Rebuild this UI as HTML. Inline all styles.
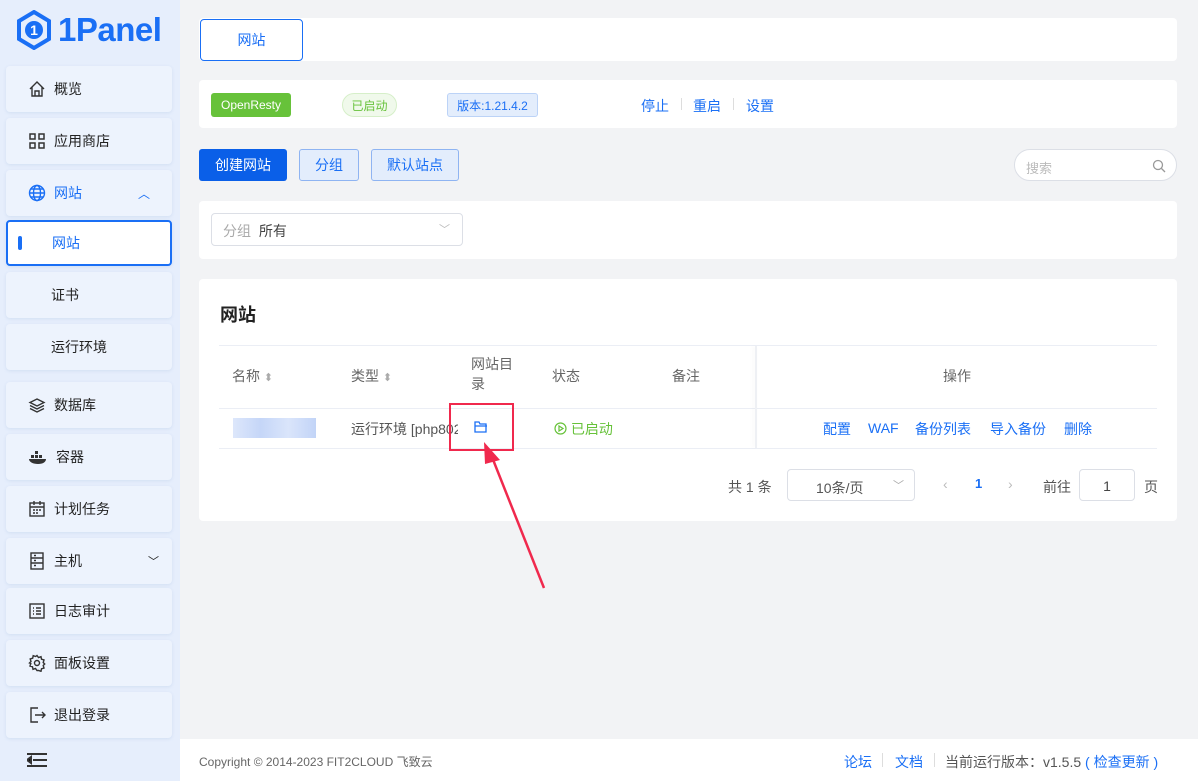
<!DOCTYPE html><html><head><meta charset="utf-8"><style>
*{box-sizing:border-box;margin:0;padding:0}
body{width:1198px;height:781px;overflow:hidden;background:#f2f3f5;font-family:"Liberation Sans","Noto Sans CJK SC",sans-serif;font-size:14px;color:#333;position:relative}
.sb{position:absolute;left:0;top:0;width:180px;height:781px;background:#e6eefc}
.logo{position:absolute;left:16px;top:10px;display:flex;align-items:center}
.logo b{font-size:33px;color:#1a6ff5;font-weight:900;margin-left:6px;letter-spacing:-0.5px}
.it{position:absolute;left:6px;width:166px;height:46px;background:#edf3fd;border-radius:4px;display:flex;align-items:center;padding-left:22px;font-size:14px;color:#222;box-shadow:0 1px 3px rgba(180,200,230,.4)}
.it svg{margin-right:8px}
.it.sub{padding-left:45px}
.it.sel{background:#fff;border:2px solid #1a6ff5;color:#1a6ff5;padding-left:10px}
.card{position:absolute;background:#fff;border-radius:4px}
.a{position:absolute}
.btn{position:absolute;height:32px;border-radius:3px;display:flex;align-items:center;justify-content:center;font-size:14px}
.blue{color:#1a6ff5}
.th{position:absolute;top:366px;color:#666;font-size:14px}
</style></head><body>
<div class="sb">
<div class="logo"><svg width="36" height="40" viewBox="0 0 36 40"><polygon points="18,2 33,11 33,29 18,38 3,29 3,11" fill="none" stroke="#1a6ff5" stroke-width="4"/><circle cx="18" cy="20" r="9" fill="#1a6ff5"/><text x="18" y="25" text-anchor="middle" fill="#fff" font-size="14" font-weight="bold" font-family="Liberation Sans">1</text></svg><b>1Panel</b></div>
<div class="it" style="top:66px"><svg width="18" height="18" viewBox="0 0 18 18" fill="none" stroke="#333" stroke-width="1.4"><path d="M2 9L9 2l7 7M4 7v9h10V7M7 16v-5h4v5"/></svg>概览</div>
<div class="it" style="top:118px"><svg width="18" height="18" viewBox="0 0 18 18" fill="none" stroke="#333" stroke-width="1.5"><rect x="2" y="2" width="5" height="5"/><rect x="11" y="2" width="5" height="5"/><rect x="2" y="11" width="5" height="5"/><rect x="11" y="11" width="5" height="5"/></svg>应用商店</div>
<div class="it" style="top:170px;color:#1a6ff5"><svg width="18" height="18" viewBox="0 0 18 18" fill="none" stroke="#1a6ff5" stroke-width="1.4"><circle cx="9" cy="9" r="7.5"/><ellipse cx="9" cy="9" rx="3.5" ry="7.5"/><path d="M1.5 9h15M3 5h12M3 13h12"/></svg>网站<span style="margin-left:56px;color:#1a6ff5;font-size:12px">︿</span></div>
<div class="it sel" style="top:220px"><span style="width:4px;height:14px;background:#1a6ff5;border-radius:2px;margin-right:30px"></span>网站</div>
<div class="it sub" style="top:272px">证书</div>
<div class="it sub" style="top:324px">运行环境</div>
<div class="it" style="top:382px"><svg width="18" height="18" viewBox="0 0 18 18" fill="none" stroke="#333" stroke-width="1.4"><path d="M9 3l7 3.5-7 3.5-7-3.5zM2 9.5l7 3.5 7-3.5M2 12.5l7 3.5 7-3.5"/></svg>数据库</div>
<div class="it" style="top:434px"><svg width="20" height="16" viewBox="0 0 20 16" fill="#333"><rect x="3" y="6" width="3" height="3"/><rect x="7" y="6" width="3" height="3"/><rect x="11" y="6" width="3" height="3"/><rect x="7" y="2" width="3" height="3"/><path d="M1 10h17c0 3-3 5-8 5S1 13 1 10z"/></svg>容器</div>
<div class="it" style="top:486px"><svg width="18" height="18" viewBox="0 0 18 18" fill="none" stroke="#333" stroke-width="1.4"><rect x="2" y="3" width="14" height="13"/><path d="M2 7h14M6 1v4M12 1v4M5 10h2M8 10h2M11 10h2M5 13h2M8 13h2"/></svg>计划任务</div>
<div class="it" style="top:538px"><svg width="18" height="18" viewBox="0 0 18 18" fill="none" stroke="#333" stroke-width="1.4"><rect x="3" y="1" width="12" height="16"/><path d="M3 6h12M3 11h12M6 3.5h2M6 8.5h2M6 13.5h2"/></svg>主机<span style="margin-left:66px;font-size:11px">﹀</span></div>
<div class="it" style="top:588px"><svg width="18" height="18" viewBox="0 0 18 18" fill="none" stroke="#333" stroke-width="1.4"><rect x="2" y="2" width="14" height="14"/><path d="M5 6h1M8 6h5M5 9h1M8 9h5M5 12h1M8 12h5"/></svg>日志审计</div>
<div class="it" style="top:640px"><svg width="18" height="18" viewBox="0 0 18 18" fill="none" stroke="#333" stroke-width="1.4"><circle cx="9" cy="9" r="2.5"/><path d="M9 1.5l1.5 2 2.5-.8.5 2.5 2.5.8-.8 2.5 1.5 1.5-1.5 1.5.8 2.5-2.5.8-.5 2.5-2.5-.8L9 16.5l-1.5-2-2.5.8-.5-2.5-2.5-.8.8-2.5L1.5 9 3 7.5l-.8-2.5 2.5-.8.5-2.5 2.5.8z"/></svg>面板设置</div>
<div class="it" style="top:692px"><svg width="18" height="18" viewBox="0 0 18 18" fill="none" stroke="#333" stroke-width="1.4"><path d="M10 2H3v14h7M7 9h10M14 6l3 3-3 3"/></svg>退出登录</div>
<svg class="a" style="left:27px;top:753px" width="20" height="14" viewBox="0 0 20 14" stroke="#333" stroke-width="2"><path d="M0 1h20M6 7h14M0 13h20M0 7l4-3v6z"/></svg>
</div>

<div class="card" style="left:199px;top:18px;width:978px;height:43px"></div>
<div class="btn" style="left:200px;top:19px;width:103px;height:42px;border:1px solid #1a6ff5;border-radius:4px;color:#1a6ff5">网站</div>

<div class="card" style="left:199px;top:80px;width:978px;height:48px"></div>
<div class="btn" style="left:211px;top:93px;width:80px;height:24px;background:#67c23a;color:#fff;font-size:12px">OpenResty</div>
<div class="btn" style="left:342px;top:93px;width:55px;height:24px;background:#f0f9eb;border:1px solid #d6efc9;border-radius:12px;color:#67c23a;font-size:12px">已启动</div>
<div class="btn" style="left:447px;top:93px;width:91px;height:24px;background:#e3edfc;border:1px solid #bcd3f7;color:#1a6ff5;font-size:12px">版本:1.21.4.2</div>
<div class="a blue" style="left:641px;top:96px">停止</div><div class="a" style="left:681px;top:98px;width:1px;height:12px;background:#ddd"></div>
<div class="a blue" style="left:693px;top:96px">重启</div><div class="a" style="left:733px;top:98px;width:1px;height:12px;background:#ddd"></div>
<div class="a blue" style="left:746px;top:96px">设置</div>

<div class="btn" style="left:199px;top:149px;width:88px;background:#0a5fe8;color:#fff">创建网站</div>
<div class="btn" style="left:299px;top:149px;width:60px;background:#e3edfc;border:1px solid #8fb4f2;color:#1a6ff5">分组</div>
<div class="btn" style="left:371px;top:149px;width:88px;background:#e3edfc;border:1px solid #8fb4f2;color:#1a6ff5">默认站点</div>
<div class="a" style="left:1014px;top:149px;width:163px;height:32px;background:#fff;border:1px solid #dcdfe6;border-radius:16px;color:#bbb;font-size:13px;padding:8px 0 0 11px">搜索<svg class="a" style="right:10px;top:9px" width="14" height="14" viewBox="0 0 14 14" fill="none" stroke="#999" stroke-width="1.3"><circle cx="6" cy="6" r="4.5"/><path d="M9.5 9.5L13 13"/></svg></div>

<div class="card" style="left:199px;top:201px;width:978px;height:58px"></div>
<div class="a" style="left:211px;top:213px;width:252px;height:33px;border:1px solid #dcdfe6;border-radius:4px;padding:7px 11px;color:#aaa">分组 <span style="color:#444;margin-left:4px">所有</span><span class="a" style="right:12px;top:7px;color:#bbb;font-size:11px">﹀</span></div>

<div class="card" style="left:199px;top:279px;width:978px;height:242px"></div>
<div class="a" style="left:220px;top:301px;font-size:18px;font-weight:bold;color:#222">网站</div>
<div class="a" style="left:219px;top:345px;width:938px;height:1px;background:#ebeef5"></div>
<div class="a" style="left:219px;top:408px;width:938px;height:1px;background:#ebeef5"></div>
<div class="a" style="left:219px;top:448px;width:938px;height:1px;background:#ebeef5"></div>
<div class="a" style="left:755px;top:346px;width:2px;height:102px;background:#eef0f4;box-shadow:-2px 0 4px rgba(0,0,0,.04)"></div>
<div class="th" style="left:232px">名称 <span style="color:#aaa;font-size:11px">⬍</span></div>
<div class="th" style="left:351px">类型 <span style="color:#aaa;font-size:11px">⬍</span></div>
<div class="th" style="left:471px;top:354px;line-height:20px">网站目<br>录</div>
<div class="th" style="left:552px">状态</div>
<div class="th" style="left:672px">备注</div>
<div class="th" style="left:943px">操作</div>
<div class="a" style="left:233px;top:418px;width:83px;height:20px;background:linear-gradient(90deg,#dde7fb,#c5d6f8,#dae5fb,#c2d4f7)"></div>
<div class="a" style="left:351px;top:419px;width:107px;overflow:hidden;white-space:nowrap;color:#555">运行环境 [php802]</div>
<svg class="a" style="left:474px;top:421px" width="14" height="12" viewBox="0 0 14 12" fill="none" stroke="#1a6ff5" stroke-width="1.3"><path d="M1 1h4l1 2h6v8H1zM1 5h12"/></svg>
<div class="a" style="left:449px;top:403px;width:65px;height:48px;border:2px solid #f0294d"></div>
<div class="a" style="left:554px;top:419px;color:#67c23a"><svg width="13" height="13" viewBox="0 0 13 13" fill="none" stroke="#67c23a" stroke-width="1.2" style="vertical-align:-1px"><circle cx="6.5" cy="6.5" r="5.5"/><path d="M5 4v5l4-2.5z"/></svg> 已启动</div>
<div class="a blue" style="left:823px;top:419px">配置</div>
<div class="a blue" style="left:868px;top:420px">WAF</div>
<div class="a blue" style="left:915px;top:419px">备份列表</div>
<div class="a blue" style="left:990px;top:419px">导入备份</div>
<div class="a blue" style="left:1064px;top:419px">删除</div>
<svg class="a" style="left:480px;top:440px" width="70" height="150" viewBox="0 0 70 150"><path d="M64 148L10 12" stroke="#f0294d" stroke-width="2.5"/><path d="M4 2L20 20 5 24z" fill="#f0294d"/></svg>
<div class="a" style="left:728px;top:477px;color:#555">共 1 条</div>
<div class="a" style="left:787px;top:469px;width:128px;height:32px;border:1px solid #dcdfe6;border-radius:4px;padding:8px 0 0 28px;color:#555">10条/页<span class="a" style="right:10px;top:7px;color:#aaa;font-size:11px">﹀</span></div>
<div class="a" style="left:943px;top:476px;color:#bbb">‹</div>
<div class="a blue" style="left:975px;top:476px;font-weight:bold;font-size:13px">1</div>
<div class="a" style="left:1008px;top:476px;color:#bbb">›</div>
<div class="a" style="left:1043px;top:477px;color:#555">前往</div>
<div class="a" style="left:1079px;top:469px;width:56px;height:32px;border:1px solid #dcdfe6;border-radius:4px;text-align:center;padding-top:8px;color:#444">1</div>
<div class="a" style="left:1144px;top:477px;color:#555">页</div>

<div class="a" style="left:180px;top:739px;width:1018px;height:42px;background:#fff"></div>
<div class="a" style="left:199px;top:753px;font-size:12px;color:#666">Copyright © 2014-2023 FIT2CLOUD 飞致云</div>
<div class="a blue" style="left:844px;top:752px">论坛</div><div class="a" style="left:882px;top:753px;width:1px;height:14px;background:#ddd"></div>
<div class="a blue" style="left:895px;top:752px">文档</div><div class="a" style="left:934px;top:753px;width:1px;height:14px;background:#ddd"></div>
<div class="a" style="left:945px;top:752px;color:#555">当前运行版本：v1.5.5 <span class="blue">( 检查更新 )</span></div>
</body></html>
